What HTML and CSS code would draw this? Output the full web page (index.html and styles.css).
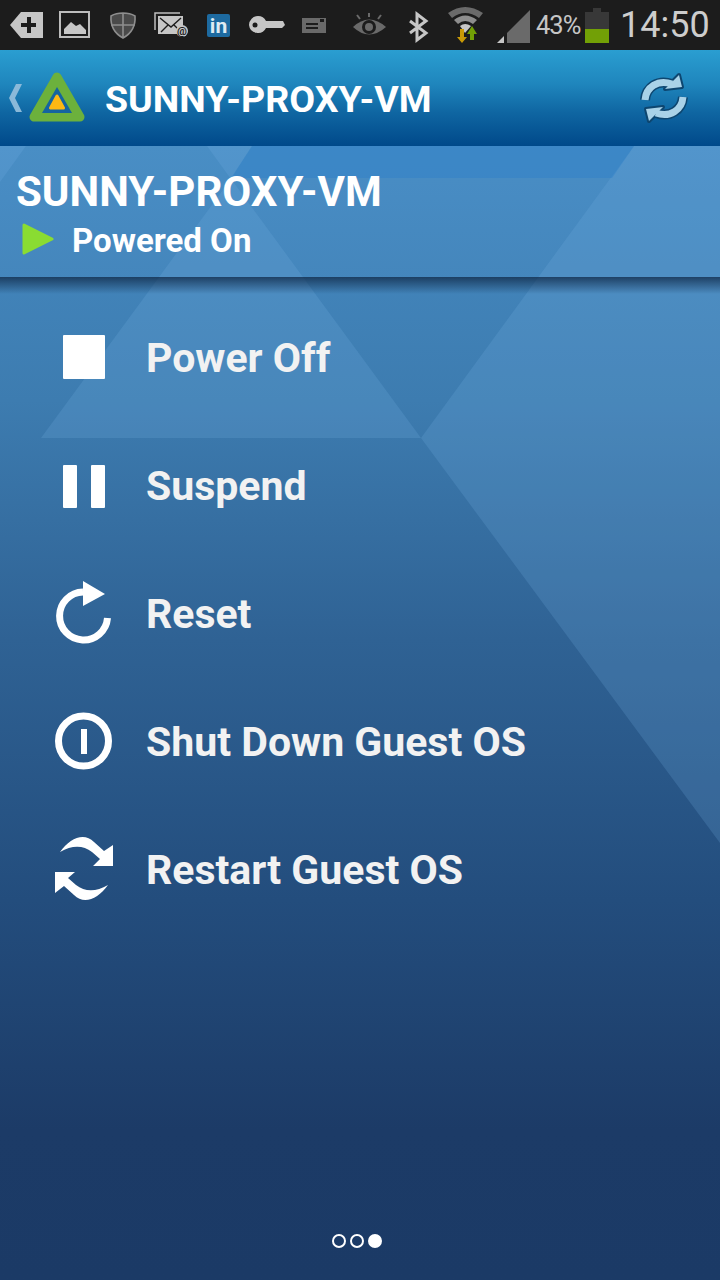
FILE: index.html
```html
<!DOCTYPE html>
<html lang="en">
<head>
    <meta charset="UTF-8">
    <meta name="viewport" content="width=device-width, initial-scale=1.0">
    <title>SUNNY-PROXY-VM</title>
    <link rel="stylesheet" href="styles.css">
</head>
<body>
    <div class="screen">
        <!-- background facets -->
        <svg class="facets" width="720" height="1280" viewBox="0 0 720 1280">
            <polygon class="facet" points="231,179 41,438 421,438"/>
            <polygon class="facet" points="634,146 421,438 720,843 720,146"/>
            <polygon class="facet" points="0,146 26,146 0,182"/>
            <polygon class="facet" points="207,146 252,146 231,179"/>
            <polygon class="facet-dark" points="252,146 634,146 612,178 231,178"/>
        </svg>

        <div class="status-bar">
            <svg class="slot" viewBox="3 0 48 50"><path class="ic" d="M10 25 21 12H43V38H21Z"/><path class="ic-dark" d="M25 23H31V17H35V23H40V27H35V33H31V27H25Z" transform="translate(-4 0)"/></svg>
            <svg class="slot" viewBox="51 0 48 50"><rect class="ic-line" x="60" y="12" width="29" height="25"/><path class="ic" d="M64 34V29L71 22 76 26 80 24 86 30V34Z"/></svg>
            <svg class="slot" viewBox="99 0 48 50"><path class="shield" d="M123 13Q130 13 135 16 136 31 123 38 110 31 111 16 116 13 123 13ZM123 13V38M111 25H135"/></svg>
            <svg class="slot" viewBox="147 0 48 50"><path class="ic-thin" d="M155 30V13H180"/><rect class="ic" x="158" y="16" width="25" height="18"/><path class="mail-line" d="M160 18 171 27 181 18M161 32 168 25M181 32 174 25"/><circle class="ic" cx="182" cy="31" r="6"/><text class="at" x="182" y="35">@</text></svg>
            <svg class="slot" viewBox="196 0 48 50"><rect class="linkedin" x="208" y="14" width="23" height="23" rx="2"/><text class="in" x="219.5" y="33">in</text></svg>
            <svg class="slot" viewBox="243 0 48 50"><path class="ic" d="M258 16A9 9 0 0 1 266 21H283L285 25 282 28H266A9 9 0 0 1 249 25 9 9 0 0 1 258 16Z"/><circle class="ic-dark" cx="255" cy="25" r="2.5"/></svg>
            <svg class="slot" viewBox="292 0 48 50"><rect class="ic-dim" x="303" y="18" width="24" height="15"/><rect class="ic-dark" x="307" y="23" width="12" height="2"/><rect class="ic-dark" x="307" y="27" width="12" height="2"/><rect class="ic-dark" x="321" y="19" width="4" height="3"/></svg>
            <svg class="slot slot-eye" viewBox="346 0 48 50"><path class="ic-dim" d="M354 27Q370 12 387 27 370 42 354 27Z"/><circle class="ic-dark" cx="370" cy="27" r="7"/><circle class="ic-dim" cx="370" cy="27" r="4"/><path class="eye-lash" d="M361 19 358 15M370 17V13M379 19 382 15"/></svg>
            <svg class="slot" viewBox="395 0 48 50"><path class="bt" d="M411 21 427 33 418 40V14L427 21 411 33"/></svg>
            <svg class="slot" viewBox="443 0 48 50">
                <path class="ic-dim" d="M449 13Q466 1 484 13L480 18Q466 8 453 18Z"/>
                <path class="wifi-mid" d="M455 20Q466 11 478 20L474 24Q466 18 459 24Z"/>
                <path class="ic" d="M461 26Q466 22 472 26L466 33Z"/>
                <path class="arrow-down" d="M461 29H465V37H468L463 43 458 37H461Z"/>
                <path class="arrow-up" d="M471 40H475V34H478L473 26 468 34H471Z"/>
            </svg>
            <svg class="signal" width="34" height="50" viewBox="498 0 34 50"><polygon class="ic" points="498,43 505,36 505,43"/><polygon class="ic-dim" points="508,33 531,10 531,43 508,43"/></svg>
            <span class="battery-pct">43%</span>
            <div class="battery"><div class="battery-nub"></div><div class="battery-body"><div class="battery-fill"></div></div></div>
            <span class="clock">14:50</span>
        </div>

        <div class="app-bar">
            <svg class="back" width="14" height="28" viewBox="9 84 14 28"><polygon points="22,84 16,84 9,98 16,112 22,112 15,98"/></svg>
            <svg class="logo" width="60" height="56" viewBox="27 70 60 56">
                <polygon class="logo-outer" points="57,77 34,117 80,117"/>
                <polygon class="logo-hole" points="57,87 42,113 72,113"/>
                <polygon class="logo-core" points="57,96 50.5,108 63.5,108"/>
            </svg>
            <span class="app-title">SUNNY-PROXY-VM</span>
            <svg class="refresh" width="56" height="60" viewBox="636 68 56 60">
                <g class="refresh-edge">
                    <path d="M645 100C646 87 658 79 672 84"/><polygon points="679,75 682,87 665,89"/>
                    <path d="M683 97C682 110 670 118 656 113"/><polygon points="649,121 646,109 663,107"/>
                </g>
                <g class="refresh-fill">
                    <path d="M645 100C646 87 658 79 672 84"/><polygon points="679,75 682,87 665,89"/>
                    <path d="M683 97C682 110 670 118 656 113"/><polygon points="649,121 646,109 663,107"/>
                </g>
            </svg>
        </div>

        <div class="vm-header">
            <h1 class="vm-name">SUNNY-PROXY-VM</h1>
            <div class="vm-state">
                <svg class="state-icon" width="32" height="32" viewBox="0 0 32 32"><path d="M2 2 30 16 2 30Z"/></svg>
                <span>Powered On</span>
            </div>
        </div>
        <div class="header-shadow"></div>

        <ul class="actions">
            <li class="action">
                <div class="action-icon"><div class="stop"></div></div>
                <span>Power Off</span>
            </li>
            <li class="action">
                <div class="action-icon"><div class="pause"><i></i><i></i></div></div>
                <span>Suspend</span>
            </li>
            <li class="action">
                <div class="action-icon">
                    <svg width="64" height="70" viewBox="52 579 64 70"><path class="ring" d="M107.5 618A24 24 0 1 1 83 592"/><polygon class="solid" points="83,581 105,594 83,606"/></svg>
                </div>
                <span>Reset</span>
            </li>
            <li class="action">
                <div class="action-icon">
                    <svg width="64" height="64" viewBox="52 709 64 64"><circle class="ring" cx="83.5" cy="740" r="25"/><rect class="solid" x="81" y="728" width="6" height="25"/></svg>
                </div>
                <span>Shut Down Guest OS</span>
            </li>
            <li class="action">
                <div class="action-icon">
                    <svg width="64" height="70" viewBox="52 835 64 70"><path class="solid" d="M60 852C70 838 84 832 94 842L104 851 113 845V866H93L100 859 92 852C83 845 72 845 60 852Z"/><path class="solid" d="M108 885C98 899 84 905 74 895L64 886 55 893V872H75L68 878 76 885C85 892 96 892 108 885Z"/></svg>
                </div>
                <span>Restart Guest OS</span>
            </li>
        </ul>

        <div class="pager">
            <span class="dot"></span>
            <span class="dot"></span>
            <span class="dot active"></span>
        </div>
    </div>
</body>
</html>
```

FILE: styles.css
```css
* {
    box-sizing: border-box;
}
body {
    margin: 0;
    font-family: Roboto, "Liberation Sans", sans-serif;
    color: #f2f2f2;
}
.screen {
    position: relative;
    width: 720px;
    height: 1280px;
    overflow: hidden;
    display: flex;
    flex-direction: column;
    background: linear-gradient(180deg, #468bc3 146px, #3d7cb0 400px, #2f6294 640px, #234d7d 900px, #1c3b67 1130px, #1b3a66 1280px);
}
.facets {
    position: absolute;
    left: 0;
    top: 0;
}
.facet {
    fill: rgba(120, 180, 228, 0.2);
}
.facet-dark {
    fill: rgba(40, 125, 200, 0.45);
}

/* status bar */
.status-bar {
    position: relative;
    height: 50px;
    flex: none;
    display: flex;
    align-items: center;
    padding-left: 3px;
    background: #1c1c1c;
}
.slot {
    width: 48px;
    height: 50px;
    flex: none;
}
.slot-eye {
    margin-left: 6px;
    margin-right: 1px;
}
.ic { fill: #c6c6c6; }
.ic-dim { fill: #6a6a6a; }
.ic-dark { fill: #1c1c1c; }
.ic-line { fill: none; stroke: #bdbdbd; stroke-width: 2; }
.ic-thin { fill: none; stroke: #bdbdbd; stroke-width: 1.5; }
.shield { fill: #4a4a4a; stroke: #8e8e8e; stroke-width: 1.6; }
.mail-line { fill: none; stroke: #1c1c1c; stroke-width: 1.4; }
.at {
    font-size: 11px;
    font-weight: 700;
    fill: #1c1c1c;
    text-anchor: middle;
}
.linkedin { fill: #1d6aa0; }
.in {
    font-size: 21px;
    font-weight: 700;
    fill: #dfeaf2;
    text-anchor: middle;
}
.eye-lash { fill: none; stroke: #6a6a6a; stroke-width: 2; }
.bt { fill: none; stroke: #c6c6c6; stroke-width: 3; }
.wifi-mid { fill: #8e8e8e; }
.arrow-down { fill: #c99a06; }
.arrow-up { fill: #72a006; }
.signal {
    flex: none;
    margin-left: 7px;
}
.battery-pct {
    width: 47px;
    margin-left: 5px;
    font-size: 25.5px;
    letter-spacing: -1px;
    color: #c6c6c6;
}
.battery {
    width: 24px;
    margin-left: 2px;
    flex: none;
}
.battery-nub {
    width: 8px;
    height: 4px;
    margin: 0 auto;
    background: #383838;
}
.battery-body {
    height: 31px;
    padding-top: 17px;
    background: #383838;
}
.battery-fill {
    height: 14px;
    background: #72a006;
}
.clock {
    margin-left: 11px;
    font-size: 36px;
    color: #cdcdcd;
}

/* app bar */
.app-bar {
    position: relative;
    height: 96px;
    flex: none;
    display: flex;
    align-items: center;
    padding-left: 9px;
    background: linear-gradient(180deg, #2a9ed1 0%, #1f86bd 35%, #0f66a2 65%, #00498a 100%);
}
.back {
    flex: none;
}
.back polygon {
    fill: #8ab9d9;
}
.logo {
    flex: none;
    margin-left: 4px;
}
.logo-outer {
    fill: #6cb13c;
    stroke: #6cb13c;
    stroke-width: 9;
    stroke-linejoin: round;
}
.logo-hole {
    fill: #14659f;
}
.logo-core {
    fill: #fdb813;
    stroke: #fdb813;
    stroke-width: 3;
    stroke-linejoin: round;
}
.app-title {
    margin-left: 18px;
    padding-top: 2px;
    font-size: 37.5px;
    font-weight: 700;
    color: #fff;
}
.refresh {
    flex: none;
    margin-left: auto;
    margin-right: 28px;
}
.refresh-edge path, .refresh-fill path {
    fill: none;
}
.refresh-edge path {
    stroke: #0d4670;
    stroke-width: 10;
}
.refresh-edge polygon {
    fill: #0d4670;
    stroke: #0d4670;
    stroke-width: 4;
    stroke-linejoin: round;
}
.refresh-fill path {
    stroke: #a9d2e8;
    stroke-width: 7;
}
.refresh-fill polygon {
    fill: #a9d2e8;
}

/* vm header */
.vm-header {
    position: relative;
    height: 131px;
    flex: none;
    padding: 21px 0 0 16px;
    background: rgba(110, 175, 225, 0.08);
}
.vm-name {
    margin: 0;
    font-size: 42px;
    line-height: 49px;
    font-weight: 700;
    color: #fff;
}
.vm-state {
    display: flex;
    align-items: center;
    height: 48px;
    padding-left: 6px;
    font-size: 33px;
    font-weight: 700;
    color: #fff;
}
.state-icon {
    flex: none;
    margin-top: -2px;
    margin-right: 18px;
    fill: #8adc32;
    stroke: #8adc32;
    stroke-width: 3;
    stroke-linejoin: round;
}
.header-shadow {
    position: relative;
    height: 17px;
    flex: none;
    background: linear-gradient(180deg, rgba(15, 40, 70, 0.75) 0%, rgba(15, 40, 70, 0) 100%);
}

/* actions */
.actions {
    position: relative;
    list-style: none;
    margin: 0;
    padding: 0;
}
.action {
    display: flex;
    align-items: center;
    height: 128px;
    font-size: 41px;
    font-weight: 700;
}
.action-icon {
    width: 146px;
    flex: none;
    display: flex;
    justify-content: center;
    padding-left: 22px;
}
.action-icon svg {
    flex: none;
}
.stop {
    width: 42px;
    height: 44px;
    margin-top: -2px;
    border-radius: 1px;
    background: #fff;
}
.pause {
    width: 42px;
    height: 43px;
    display: flex;
    justify-content: space-between;
}
.pause i {
    width: 14px;
    border-radius: 1px;
    background: #fff;
}
.ring {
    fill: none;
    stroke: #fff;
    stroke-width: 7;
}
.solid {
    fill: #fff;
}

/* pager */
.pager {
    position: absolute;
    left: 332px;
    top: 1234px;
    display: flex;
    gap: 4px;
}
.dot {
    width: 14px;
    height: 14px;
    border: 2.5px solid #fff;
    border-radius: 50%;
}
.dot.active {
    background: #fff;
}
```
